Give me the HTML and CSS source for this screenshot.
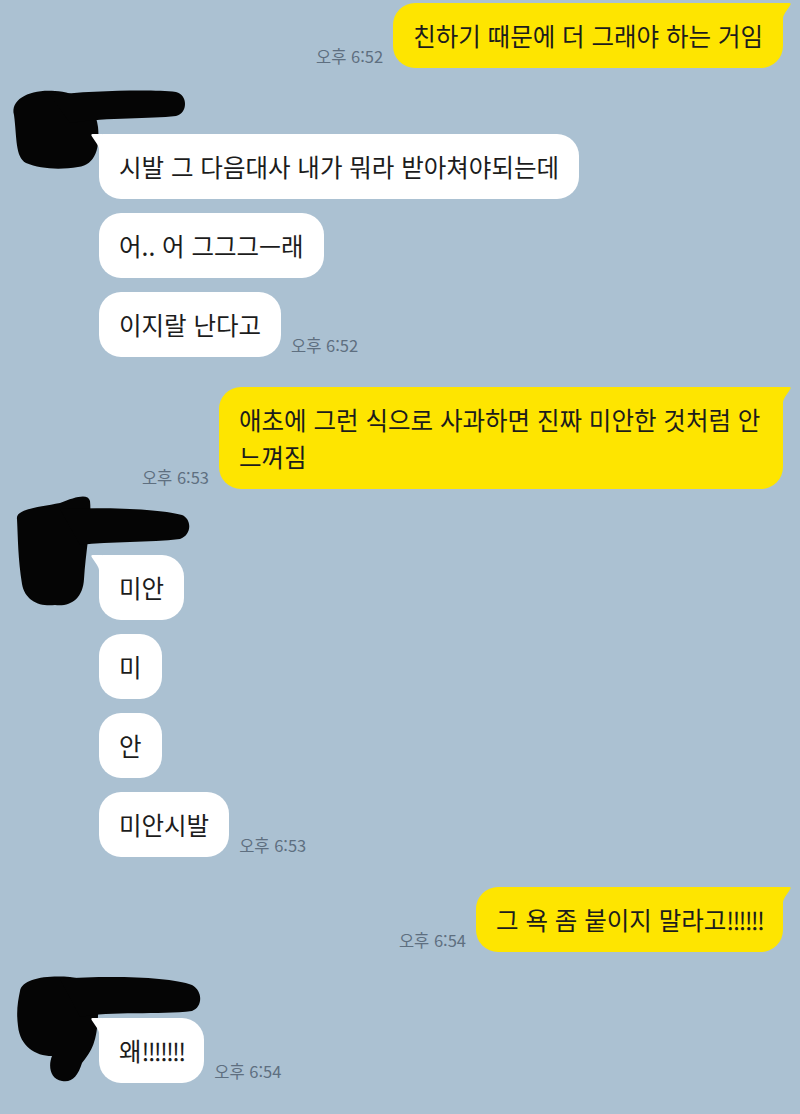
FILE: index.html
```html
<!DOCTYPE html>
<html lang="ko">
<head>
<meta charset="utf-8">
<title>chat</title>
<link rel="stylesheet" href="styles.css">
</head>
<body>
<div class="chat">

  <div class="group sent first">
    <div class="row">
      <span class="time">오후 6:52</span>
      <div class="bubble yellow tail">친하기 때문에 더 그래야 하는 거임<svg class="tl" width="12" height="15" viewBox="0 0 12 15"><path d="M0 0 L9.5 0 Q11.5 0.3 10.2 2.2 L5 10 Q3.4 12.6 3 15 L0 15 Z"/></svg></div>
    </div>
  </div>

  <div class="group received g1">
    <svg class="censor c1" width="200" height="100" viewBox="0 0 200 100">
      <path d="M14 28 C10 12 30 2 55 4 C75 5 95 14 98 40 C100 60 96 78 78 80 C60 83 40 82 26 76 C15 70 17 50 14 28 Z"/>
      <path d="M50 8 C90 4 150 2 176 5 C188 8 188 26 176 29 C150 32 110 30 70 36 Z"/>
    </svg>
    <div class="row"><div class="bubble white tail">시발 그 다음대사 내가 뭐라 받아쳐야되는데<svg class="tl" width="12" height="15" viewBox="0 0 12 15"><path d="M12 0 L2.5 0 Q0.5 0.3 1.8 2.2 L7 10 Q8.6 12.6 9 15 L12 15 Z"/></svg></div></div>
    <div class="row"><div class="bubble white">어.. 어 그그그—래</div></div>
    <div class="row"><div class="bubble white">이지랄 난다고</div><span class="time">오후 6:52</span></div>
  </div>

  <div class="group sent">
    <div class="row">
      <span class="time">오후 6:53</span>
      <div class="bubble yellow tail">애초에 그런 식으로 사과하면 진짜 미안한 것처럼 안 느껴짐<svg class="tl" width="12" height="15" viewBox="0 0 12 15"><path d="M0 0 L9.5 0 Q11.5 0.3 10.2 2.2 L5 10 Q3.4 12.6 3 15 L0 15 Z"/></svg></div>
    </div>
  </div>

  <div class="group received g2">
    <svg class="censor c2" width="200" height="125" viewBox="0 0 200 125">
      <path d="M17 30 C15 20 40 18 60 14 C75 8 88 4 90 12 C92 30 86 60 84 90 C83 110 70 118 55 116 C40 118 25 112 22 95 C18 70 18 50 17 30 Z"/>
      <path d="M60 20 C110 18 160 20 182 26 C192 30 192 46 180 50 C150 54 110 52 80 56 Z"/>
    </svg>
    <div class="row"><div class="bubble white tail">미안<svg class="tl" width="12" height="15" viewBox="0 0 12 15"><path d="M12 0 L2.5 0 Q0.5 0.3 1.8 2.2 L7 10 Q8.6 12.6 9 15 L12 15 Z"/></svg></div></div>
    <div class="row"><div class="bubble white">미</div></div>
    <div class="row"><div class="bubble white">안</div></div>
    <div class="row"><div class="bubble white">미안시발</div><span class="time">오후 6:53</span></div>
  </div>

  <div class="group sent">
    <div class="row">
      <span class="time">오후 6:54</span>
      <div class="bubble yellow tail">그 욕 좀 붙이지 말라고<span class="excl">!!!!!!</span><svg class="tl" width="12" height="15" viewBox="0 0 12 15"><path d="M0 0 L9.5 0 Q11.5 0.3 10.2 2.2 L5 10 Q3.4 12.6 3 15 L0 15 Z"/></svg></div>
    </div>
  </div>

  <div class="group received g3">
    <svg class="censor c3" width="210" height="120" viewBox="0 0 210 120">
      <path d="M20 20 C22 8 45 4 70 6 C90 8 100 20 98 45 C97 70 92 80 82 92 C78 105 72 112 62 110 C50 108 48 95 52 85 C35 85 20 75 18 55 C16 40 18 30 20 20 Z"/>
      <path d="M60 8 C110 4 170 6 192 14 C203 20 203 36 192 40 C160 44 110 40 80 46 Z"/>
    </svg>
    <div class="row"><div class="bubble white tail">왜<span class="excl">!!!!!!!</span><svg class="tl" width="12" height="15" viewBox="0 0 12 15"><path d="M12 0 L2.5 0 Q0.5 0.3 1.8 2.2 L7 10 Q8.6 12.6 9 15 L12 15 Z"/></svg></div><span class="time">오후 6:54</span></div>
  </div>

</div>
</body>
</html>
```

FILE: styles.css
```css
* { box-sizing: border-box; }

html, body {
  margin: 0;
  padding: 0;
  background: #abc1d2;
}

body {
  font-family: "Noto Sans CJK KR", "Noto Sans", sans-serif;
  width: 800px;
  height: 1114px;
  overflow: hidden;
}

.chat {
  padding: 3px 17px 0 0;
  display: flex;
  flex-direction: column;
}

.group {
  display: flex;
  flex-direction: column;
  gap: 14px;
  position: relative;
}

.sent { margin-top: 30px; }
.sent.first { margin-top: 0; }

.received {
  margin-top: 19px;
  padding-top: 47px;
  padding-left: 99px;
}

.row {
  display: flex;
  align-items: flex-end;
  gap: 10px;
}

.sent .row { justify-content: flex-end; }

.bubble {
  position: relative;
  font-size: 24.5px;
  line-height: 37px;
  padding: 14px 20px;
  border-radius: 22px;
  color: #1c1c1c;
  max-width: 564px;
  word-break: keep-all;
}

.excl {
  letter-spacing: -1.8px;
}

.yellow { background: #fee500; }
.white { background: #ffffff; }

.yellow.tail { border-top-right-radius: 4px; }
.white.tail { border-top-left-radius: 4px; }

.tl {
  position: absolute;
  top: 0;
  display: block;
}
.yellow .tl { right: -9px; fill: #fee500; }
.white .tl { left: -9px; fill: #ffffff; }

.time {
  font-size: 16.5px;
  line-height: 20px;
  color: #5e6f80;
  white-space: nowrap;
  margin-bottom: 2px;
}

.censor {
  position: absolute;
  left: 0;
  fill: #050505;
}
.c1 { top: 0; }
.c2 { top: -19px; }
.c3 { top: 0; }
```
